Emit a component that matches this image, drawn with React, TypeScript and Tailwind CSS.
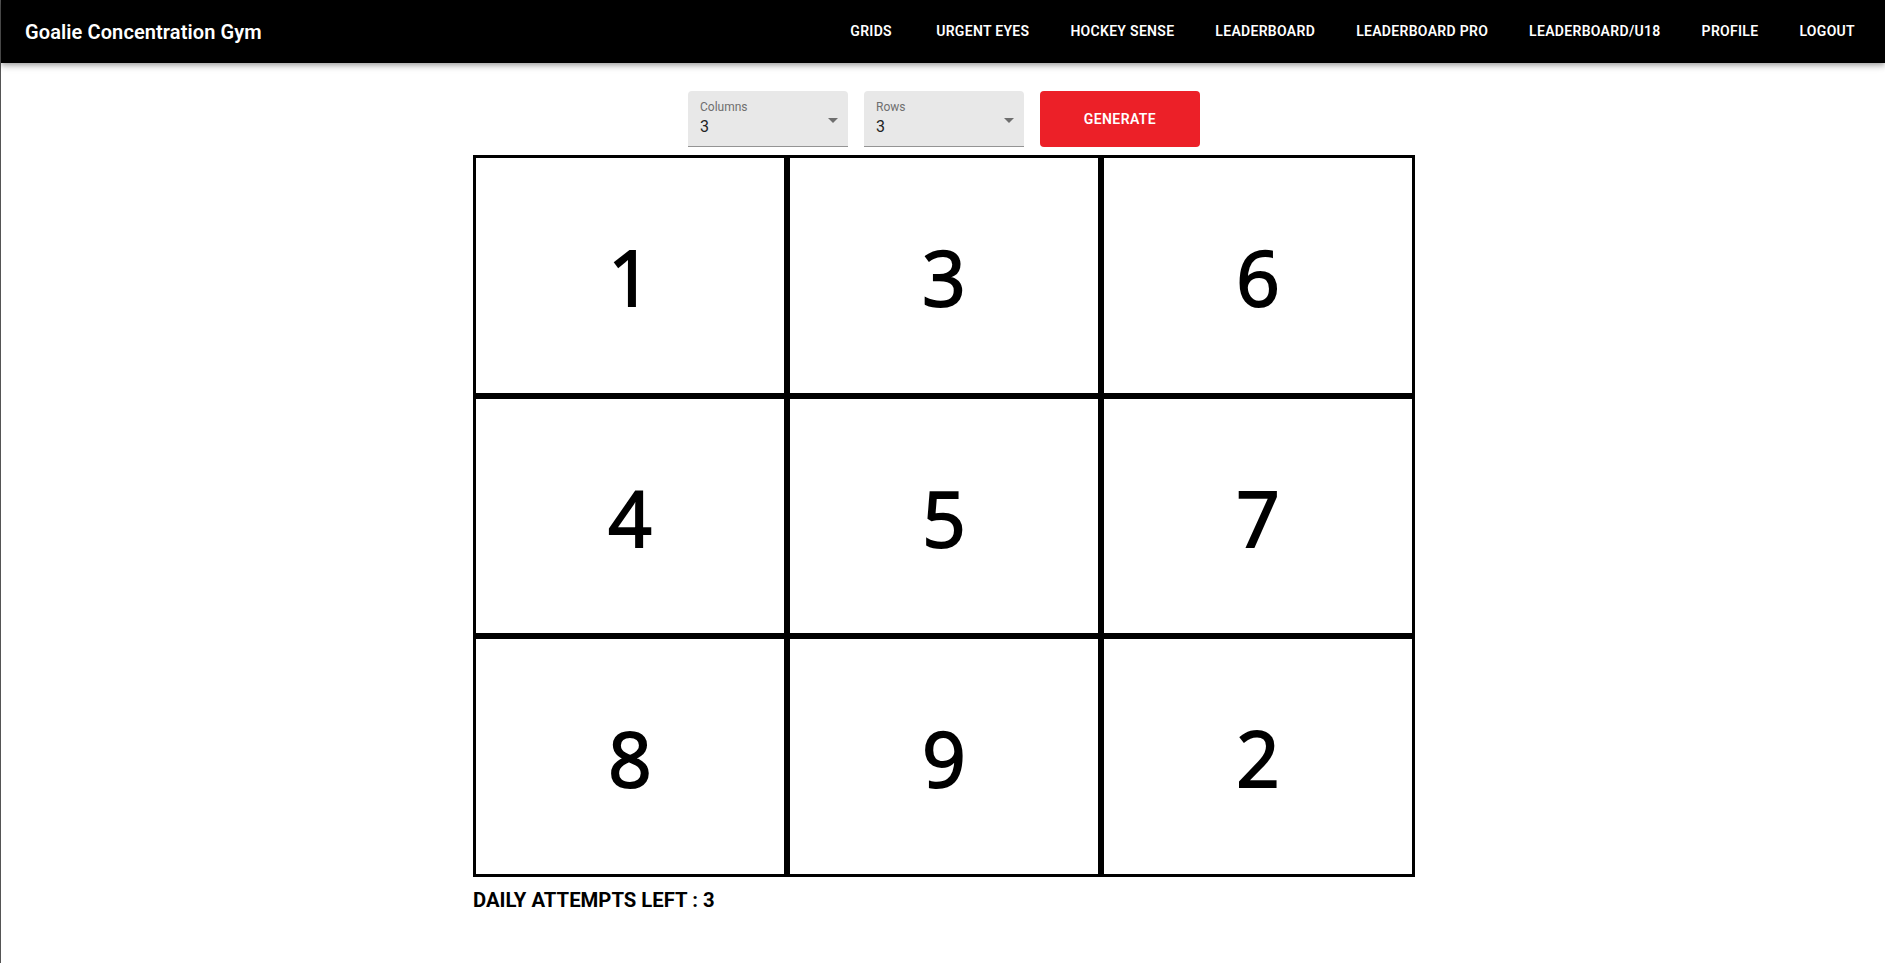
import React from 'react';

const navItems = ['Grids', 'Urgent Eyes', 'Hockey Sense', 'Leaderboard', 'Leaderboard Pro', 'Leaderboard/U18', 'Profile', 'Logout'];
const cells = [1, 3, 6, 4, 5, 7, 8, 9, 2];

function FilledSelect({ label, value }: { label: string; value: string }) {
  return (
    <div className="relative h-14 w-40 rounded-t bg-[#e8e8e8] border-b border-[#949494] px-3 pt-[10px] cursor-pointer">
      <div className="text-xs leading-none text-[#6f6f6f]">{label}</div>
      <div className="mt-[6px] text-base leading-none text-[#222]">{value}</div>
      <svg className="absolute right-[10px] top-[27px]" width="10" height="5" viewBox="0 0 10 5">
        <path d="M0 0l5 5 5-5z" fill="#6e6e6e" />
      </svg>
    </div>
  );
}

export default function App() {
  return (
    <div className="min-h-[963px] bg-white border-l border-[#555] font-['Roboto','Liberation_Sans',sans-serif]">
      {/* App bar */}
      <header className="relative z-10 h-[63px] bg-black text-white flex items-center pl-6 pr-[22px] shadow-[0_2px_4px_-1px_rgba(0,0,0,0.2),0_4px_5px_0_rgba(0,0,0,0.14),0_1px_10px_0_rgba(0,0,0,0.12)]">
        <h1 className="text-[20px] font-semibold tracking-[0.1px]">Goalie Concentration Gym</h1>
        <nav className="ml-auto flex items-center gap-[25px]">
          {navItems.map((item) => (
            <button
              key={item}
              className="min-w-16 px-2 py-[6px] text-sm font-semibold uppercase tracking-[0.3px] leading-[1.75] text-white"
            >
              {item}
            </button>
          ))}
        </nav>
      </header>

      <main className="flex flex-col items-center pl-[2px]">
        {/* Controls */}
        <div className="mt-[28px] flex gap-4">
          <FilledSelect label="Columns" value="3" />
          <FilledSelect label="Rows" value="3" />
          <button className="h-14 w-40 rounded bg-[#ec2028] text-white text-sm font-semibold uppercase tracking-[0.4px]">
            Generate
          </button>
        </div>

        {/* Number grid */}
        <div className="mt-2 w-[942px]">
          <div className="grid grid-cols-3">
            {cells.map((n) => (
              <div
                key={n}
                className="h-[240.5px] border-[3px] border-black flex items-center justify-center pt-[4px] font-['Open_Sans',sans-serif] text-[76px] text-black [-webkit-text-stroke:2px_black]"
              >
                {n}
              </div>
            ))}
          </div>
          <p className="mt-2 text-[20.3px] font-bold leading-[1.5] text-black">DAILY ATTEMPTS LEFT : 3</p>
        </div>
      </main>
    </div>
  );
}
